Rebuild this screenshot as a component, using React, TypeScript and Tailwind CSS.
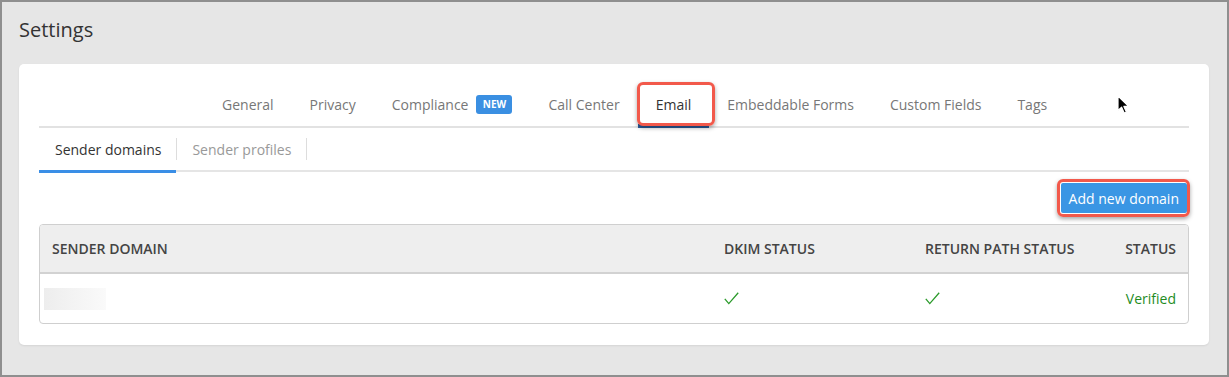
import React from "react";

const font = { fontFamily: '"Open Sans", "Liberation Sans", sans-serif' };

function Check() {
  return (
    <svg width="15" height="13" viewBox="0 0 15 13" fill="none">
      <polyline points="0.8,6.8 4.8,11.6 14.2,0.8" stroke="#2a9a2a" strokeWidth="1.3" fill="none" />
    </svg>
  );
}

function Cursor() {
  return (
    <svg width="14" height="20" viewBox="0 0 14 20">
      <path d="M1 1 L1 15.5 L4.6 12.2 L7.2 18 L9.4 17 L6.9 11.4 L11.6 11.4 Z" fill="#000" stroke="#fff" strokeWidth="1.2" strokeLinejoin="round" />
    </svg>
  );
}

export default function App() {
  const tabs = ["General", "Privacy", "Compliance", "Call Center", "Email", "Embeddable Forms", "Custom Fields", "Tags"];
  return (
    <div className="w-[1229px] h-[377px] border-2 border-[#8f8f8f] bg-[#e6e6e6] overflow-hidden" style={font}>
      <div className="pl-[17px] pr-[18px] pt-[14px]">
        <div className="text-[20px] leading-[28px] text-[#333]">Settings</div>
        <div className="mt-[20px] bg-white rounded-[5px] shadow-[0_1px_2px_rgba(0,0,0,0.08)] px-5 pt-[18px] pb-[21px] relative">
          {/* Top tabs */}
          <div className="flex border-b-2 border-[#e2e2e2] pl-[165px] relative">
            {tabs.map((t) => (
              <div key={t} className="relative h-[44px] px-[18px] flex items-center text-[14px] text-[#777]">
                {t === "Email" ? (
                  <>
                    <span className="text-[#333]">{t}</span>
                    <div className="absolute left-0 right-0 bottom-[-2px] h-[4px] bg-[#2b5c9c]" />
                    <div className="absolute left-[-1px] right-[-6px] top-0 bottom-0 border-[3px] border-[#f2594b] rounded-[6px] shadow-[0_2px_4px_rgba(0,0,0,0.35)]" />
                  </>
                ) : (
                  <span>{t}</span>
                )}
                {t === "Compliance" && (
                  <span className="ml-2 h-[19px] w-[36px] rounded-[3px] bg-[#3a8fe2] text-white text-[10px] font-bold flex items-center justify-center">NEW</span>
                )}
              </div>
            ))}
            <div className="absolute left-[1078px] top-[13px]">
              <Cursor />
            </div>
          </div>
          {/* Sub tabs */}
          <div className="flex items-center border-b-2 border-[#e5e5e5] h-[44px] relative">
            <div className="relative h-full flex items-center pl-4 pr-[15px] text-[14px] text-[#333]">
              Sender domains
              <div className="absolute left-0 right-0 bottom-[-3px] h-[3px] bg-[#3a8ee6]" />
            </div>
            <div className="w-px h-[22px] bg-[#ddd]" />
            <div className="h-full flex items-center pl-[15px] pr-[15px] text-[14px] text-[#999]">Sender profiles</div>
            <div className="w-px h-[22px] bg-[#ddd]" />
          </div>
          {/* Button */}
          <div className="flex justify-end pt-[11px] pr-[2px]">
            <div className="relative">
              <div className="h-[30px] px-[8px] bg-[#3a96e4] text-white text-[14px] flex items-center rounded-[2px]">Add new domain</div>
              <div className="absolute -left-[4px] -right-[3px] -top-[4px] -bottom-[4px] border-[3px] border-[#f2594b] rounded-[6px] shadow-[0_2px_4px_rgba(0,0,0,0.35)]" />
            </div>
          </div>
          {/* Table */}
          <div className="mt-[11px] border border-[#cfcfcf] rounded-[4px] overflow-hidden">
            <div className="grid grid-cols-[672px_201px_1fr_auto] h-[49px] items-center bg-[#eeeeee] border-b-2 border-[#d2d2d2] text-[14px] font-semibold text-[#444]">
              <div className="px-3">SENDER DOMAIN</div>
              <div className="px-3">DKIM STATUS</div>
              <div className="px-3">RETURN PATH STATUS</div>
              <div className="px-3">STATUS</div>
            </div>
            <div className="grid grid-cols-[672px_201px_1fr_auto] h-[49px] items-center text-[14px]">
              <div className="pl-1">
                <div className="w-[62px] h-[22px] bg-gradient-to-r from-[#ededed] to-[#fafafa]" />
              </div>
              <div className="px-3 flex"><Check /></div>
              <div className="px-3 flex"><Check /></div>
              <div className="px-3 text-[#1f8c1f]">Verified</div>
            </div>
          </div>
        </div>
      </div>
    </div>
  );
}
